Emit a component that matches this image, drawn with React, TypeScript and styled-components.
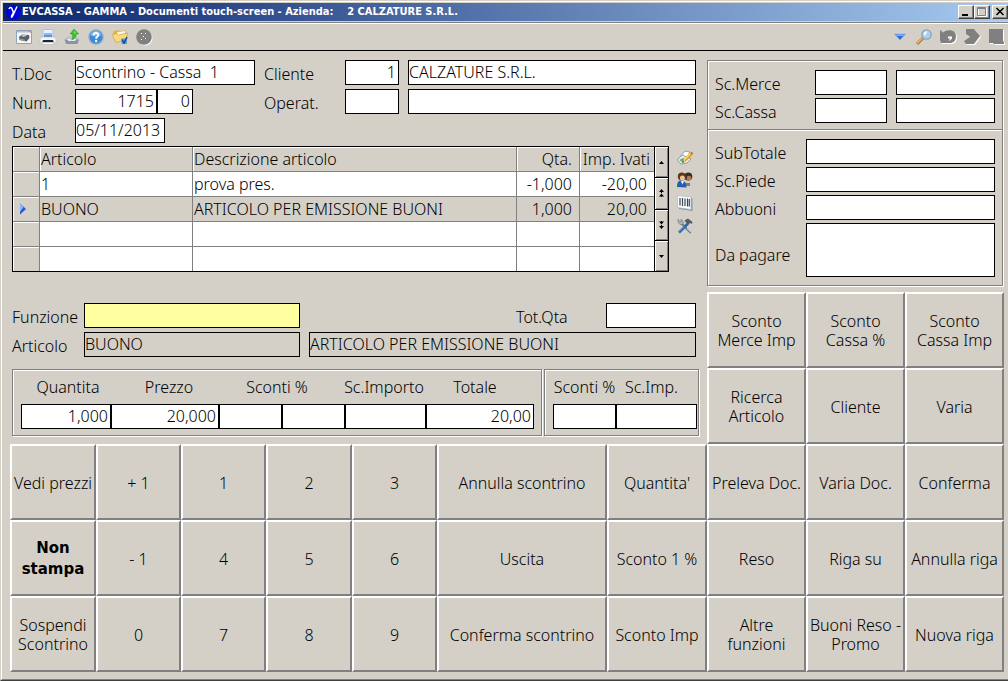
import React from "react";
import styled, { createGlobalStyle, css } from "styled-components";

const FACE = "#d4d0c8";
const SHADOW = "#808080";

const GlobalStyle = createGlobalStyle`
  *, *::before, *::after { box-sizing: border-box; }
  html, body { margin: 0; background: ${FACE}; }
  body, button, input {
    font-family: "Noto Sans", "Open Sans", sans-serif;
    font-size: 16px;
    font-weight: 300;
    line-height: 22px;
    color: #000;
  }
`;

const Window = styled.div`
  min-height: 100vh;
  display: flex;
  flex-direction: column;
  overflow: hidden;
  border: 1px solid ${FACE};
  border-right: 0;
  border-bottom-color: #404040;
`;

const Frame = styled.div`
  flex: 1;
  padding: 1px 0 0 1px;
  border: 1px solid #fff;
  border-right: 0;
  border-bottom-color: ${SHADOW};
`;

const TitleBar = styled.header`
  display: flex;
  align-items: center;
  height: 18px;
  padding-left: 2px;
  background: linear-gradient(to right, #0a246a, #a6caf0);
`;

const Title = styled.h1`
  flex: 1;
  margin: 0 0 0 1px;
  color: #fff;
  font: 700 11px/18px "DejaVu Sans Condensed", "DejaVu Sans", sans-serif;
  white-space: pre;
`;

const CaptionButton = styled.button<{ $gap?: boolean }>`
  width: 16px;
  height: 14px;
  padding: 0;
  margin-left: ${(p) => (p.$gap ? 2 : 0)}px;
  background: ${FACE};
  border: 1px solid;
  border-color: #fff #404040 #404040 #fff;
  box-shadow: inset -1px -1px 0 ${SHADOW};
  svg { display: block; }
`;

const Toolbar = styled.div`
  display: flex;
  align-items: center;
  gap: 8px;
  height: 29px;
  margin-top: 1px;
  padding: 0 4px 0 13px;
  border-top: 1px solid ${SHADOW};
  border-bottom: 1px solid #000;
  box-shadow: inset 0 1px 0 #fff;
`;

const IconButton = styled.button`
  width: 16px;
  height: 16px;
  padding: 0;
  border: 0;
  background: none;
  svg { display: block; overflow: visible; }
`;

const Spacer = styled.span`
  flex: 1;
`;

const Body = styled.main`
  display: grid;
  grid-template-columns: minmax(0, 697fr) minmax(0, 297fr);
  padding: 9px 4px 7px 7px;
`;

const Column = styled.section`
  display: flex;
  flex-direction: column;
`;

const Area = styled.div<{ $top?: number }>`
  display: flex;
  flex-direction: column;
  gap: 4px;
  margin: ${(p) => p.$top ?? 0}px 11px 0 2px;
`;

const Row = styled.div`
  display: flex;
`;

const Label = styled.label<{ $w: number }>`
  flex: none;
  width: ${(p) => p.$w}px;
  padding-top: 3px;
  white-space: nowrap;
`;

const Field = styled.input<{ $w?: number; $gap?: boolean; $right?: boolean; $tone?: string; $tall?: boolean }>`
  ${(p) => (p.$w ? css`flex: none; width: ${p.$w}px;` : css`flex: 1; width: 0; min-width: 0;`)}
  height: ${(p) => (p.$tall ? 54 : 25)}px;
  margin: 0 0 0 ${(p) => (p.$gap ? 9 : 0)}px;
  padding: 0 2px 2px 0;
  border: 1px solid #000;
  border-radius: 0;
  outline: 0;
  background: ${(p) => p.$tone ?? "#fff"};
  text-align: ${(p) => (p.$right ? "right" : "left")};
`;

const HeaderForm = styled(Area)`
  display: grid;
  grid-template-columns: 252px minmax(0, 1fr);
  gap: 0;
`;

const Stack = styled.div`
  display: flex;
  flex-direction: column;
  gap: 4px;
`;

const TableArea = styled.div`
  display: flex;
  margin: 3px 14px 0 2px;
`;

const TableFrame = styled.div`
  flex: 1;
  display: flex;
  border: 1px solid #000;
`;

const Table = styled.table`
  flex: 1;
  width: 0;
  table-layout: fixed;
  border-spacing: 0;
  background: #fff;
`;

const Tr = styled.tr<{ $shaded?: boolean }>`
  background: ${(p) => (p.$shaded ? FACE : "#fff")};
  &:last-child > * { border-bottom: 0; height: 24px; }
  thead &:last-child > * { border-bottom: 1px solid ${SHADOW}; height: 25px; }
`;

const cell = css<{ $right?: boolean; $last?: boolean }>`
  height: 25px;
  border-bottom: 1px solid ${SHADOW};
  border-right: ${(p) => (p.$last ? "0" : `1px solid ${SHADOW}`)};
  text-align: ${(p) => (p.$right ? "right" : "left")};
  font-weight: 300;
  line-height: 22px;
  white-space: nowrap;
`;

const Th = styled.th`
  ${cell}
  padding: 0 ${(p) => (p.$last ? 4 : 7)}px 0 1px;
  background: ${FACE};
  box-shadow: inset 1px 1px 0 #fff;
`;

const Td = styled.td`
  ${cell}
  padding: 0 7px 0 1px;
`;

const Selector = styled.td`
  ${cell}
  padding: 0 0 0 6px;
  background: ${FACE};
  box-shadow: inset 1px 1px 0 #fff;
  svg { display: block; }
`;

const Scroller = styled.div`
  display: flex;
  flex-direction: column;
  width: 14px;
  border-left: 1px solid #000;
`;

const ScrollButton = styled.button`
  flex: 1;
  display: flex;
  align-items: center;
  justify-content: center;
  padding: 0;
  border: 0;
  background: ${FACE};
  box-shadow: inset 1px 1px 0 #fff, inset -1px -1px 0 ${SHADOW};
  & + & { border-top: 1px solid #000; }
`;

const SideIcons = styled.div`
  display: flex;
  flex-direction: column;
  gap: 7px;
  margin-left: 8px;
  padding-top: 3px;
`;

const Group = styled.div`
  border: 1px solid ${SHADOW};
  box-shadow: inset 1px 1px 0 #fff, 1px 1px 0 #fff;
`;

const TotalsGroup = styled(Group)`
  display: flex;
  flex-direction: column;
  gap: 3px;
  margin-right: 1px;
  padding: 9px 7px 6px;
  & + & { margin-top: -1px; padding-bottom: 8px; }
`;

const DueLabel = styled(Label)`
  align-self: center;
  padding-top: 10px;
`;

const LineGroups = styled.div`
  display: grid;
  grid-template-columns: minmax(0, 530fr) minmax(0, 155fr);
  gap: 2px;
  margin: 12px 8px 8px 2px;
`;

const LineGroup = styled(Group)<{ $right: number }>`
  padding: 0 ${(p) => p.$right}px 6px 8px;
`;

const Captions = styled.div<{ $cols: string }>`
  display: grid;
  grid-template-columns: ${(p) => p.$cols};
  padding: 6px 0;
  text-align: center;
  white-space: nowrap;
`;

const LineFields = styled.div<{ $cols: string }>`
  display: grid;
  grid-template-columns: ${(p) => p.$cols};
  input { width: 100%; }
`;

const Keypad = styled.div<{ $cols: string }>`
  display: grid;
  grid-template-columns: ${(p) => p.$cols};
  grid-auto-rows: 76px;
  margin-top: auto;
`;

const Key = styled.button<{ $bold?: boolean }>`
  min-width: 0;
  padding: 2px 0 0;
  border: 2px solid;
  border-color: #fff ${SHADOW} ${SHADOW} #fff;
  background: ${FACE};
  line-height: 19px;
  white-space: pre;
  ${(p) => p.$bold && css`font: 700 15px/21px "DejaVu Sans", sans-serif;`}
`;

const Icon = ({ children }: { children: React.ReactNode }) => (
  <svg width="16" height="16" viewBox="0 0 16 16" aria-hidden="true">{children}</svg>
);

const GammaLogo = () => (
  <Icon>
    <circle cx="8.500" cy="8.500" r="7.300" fill="#0000d8" />
    <path d="M4 5c.8-2.300 2.800-2 3.300.5L8.600 9M12 2.500 8.800 9.500c-1.800 4.500-2.800 4.500-2 2L8.500 8.500" fill="none" stroke="#fff" strokeWidth="1.500" />
  </Icon>
);

const CashIcon = () => (
  <Icon>
    <path d="M.5 1.500h15v13H.5z" fill="#f4f6f8" stroke="#8fa3b8" />
    <path d="M1 2h14v1.500H1z" fill="#a9bfd6" />
    <path d="m12.500 1.500 2 2" stroke="#d66" />
    <path d="m3 8 3-2.500 7 .5.5 3-3 3.500-7-1.500z" fill="#5c5f63" />
    <path d="m5 6.500 4-1 2 1.300-4 1.200z" fill="#c4c8cc" />
    <path d="m4 9.500 5 1.200v1.200l-5-1.200z" fill="#999" />
  </Icon>
);

const PrinterIcon = () => (
  <Icon>
    <path d="M3 .5h10v8.500H3z" fill="#e8f1fc" stroke="#a9c3e2" />
    <path d="M4 4h8v4.500H4z" fill="#4f90e4" />
    <path d="M4 4h8v2H4z" fill="#8dbcf4" />
    <path d="M1 8h14l1 2.500V14H0v-3.500z" fill="#f3f5f8" stroke="#b3bac4" strokeWidth=".6" />
    <path d="M3 11h10l.7 2H2.300z" fill="#22262c" />
    <path d="M2 13.500h12v2H2z" fill="#fdfdfd" stroke="#a9adb3" strokeWidth=".5" />
  </Icon>
);

const ExportIcon = () => (
  <Icon>
    <path d="m1 10 3-2.500h8.500L15 10l-2 4.500H3z" fill="#b9c2ce" />
    <path d="m.5 10.500 1.500 4.500h11.500l1.500-4.500z" fill="#8994a3" />
    <path d="M3 10h9l-1 2H4.500z" fill="#e8edf3" />
    <path d="m10 0 4.800 5h-2.500c0 3-1.500 5-4.800 6C9 9 8.800 7.500 8.300 5H6z" fill="#35c728" stroke="#219b1b" strokeWidth=".5" />
    <path d="m10 1.500 2 2.500h-1.500l-.5 2z" fill="#8eea78" />
  </Icon>
);

const HelpIcon = () => (
  <Icon>
    <circle cx="8" cy="8" r="7" fill="#3b8ad4" stroke="#8aa9c6" strokeWidth="1.300" />
    <path d="M2.500 6.500a5.600 5.600 0 0 1 11 0c-3 1.500-8 1.500-11 0z" fill="#79b6ec" />
    <path d="M5.500 6.200C5.700 3.300 10.500 3.400 10.300 6c-.1 1.700-2.200 1.700-2.200 3.700" fill="none" stroke="#fff" strokeWidth="1.900" />
    <circle cx="8.100" cy="12" r="1.200" fill="#fff" />
  </Icon>
);

const FolderIcon = () => (
  <Icon>
    <path d="m1 2.500 5-1.500 1.500 1.500 6-1.500 1.500 9L3 13z" fill="#e3b344" />
    <path d="m5 3.500 8-1.500.5 4-8 2z" fill="#fffbe8" />
    <path d="m0 5.500 5-1L6.500 6 15.500 4 14 11 4 13.500z" fill="#f8d985" stroke="#c99a35" strokeWidth=".6" />
    <path d="M9.500 9.500h5.500V15H9.500z" fill="#5c9bdc" />
    <path d="m10 10.500 2 3.500 3-6" fill="none" stroke="#174a87" strokeWidth="1.500" />
  </Icon>
);

const DisabledGlobeIcon = () => (
  <Icon>
    <circle cx="9" cy="9" r="7.500" fill="#fff" />
    <circle cx="8" cy="8" r="7.800" fill={SHADOW} />
    <path d="M5 4h1v1H5zM9 4h1v1H9zM7 7h1v1H7zM5 10h1v1H5zM9 9h1v1H9z" fill="#fff" />
  </Icon>
);

const DropArrowIcon = () => (
  <Icon>
    <path d="M2.500 5h11L8 11z" fill="#2f6be0" stroke="#89abea" strokeWidth=".6" />
    <path d="M3.500 5.500h9L11 7H5z" fill="#84b2f7" />
  </Icon>
);

const MagnifierIcon = () => (
  <Icon>
    <path d="m7 9-6 6" stroke="#a87532" strokeWidth="3" />
    <path d="m6.500 9-5.500 5.500" stroke="#eebd68" strokeWidth="1.300" />
    <circle cx="10.500" cy="5.500" r="4.700" fill="#a5d2f4" stroke="#8e9fb0" strokeWidth="1.300" />
    <path d="M7.500 5a3 3 0 0 1 4-2.500L9 7z" fill="#eef8ff" />
  </Icon>
);

const disabledShapes = {
  undo: "M0 1l3.500 2.500C6 0 16 0 16 7c0 5-3 7-6 7H1L0 11z",
  forward: "M2 0h8l6 7-6 8H2l-2-3 6-4-4-3z",
  exit: "M1 0h14v12l1 1v2H6l-1-1H1z",
};

const DisabledIcon = ({ shape }: { shape: keyof typeof disabledShapes }) => (
  <Icon>
    <path d={disabledShapes[shape]} fill="#fff" transform="translate(1 1)" />
    <path d={disabledShapes[shape]} fill={SHADOW} />
    {shape === "undo" && <path d="M8 7.500h4v2l-2 2H8.500l2-2H8z" fill="#fff" />}
  </Icon>
);

const NotesIcon = () => (
  <Icon>
    <path d="m3 8 5-6 5 1-3 5z" fill="#f8fafb" stroke="#7d8b99" strokeWidth=".8" />
    <path d="m0 11 5-5 9 4-4 4-6 1z" fill="#e5ebf1" stroke="#7d8b99" strokeWidth=".8" />
    <path d="m2 11 4-2 2 1-3 3z" fill="#6aaf62" />
    <path d="m14.500 4.500-7 7" stroke="#dc9b16" strokeWidth="3" />
    <path d="m14 4-7 7" stroke="#ffe16b" strokeWidth="1.200" />
    <path d="m14 3.500 1.500 1.500" stroke="#d15b4f" strokeWidth="2" />
    <path d="m5 14 1-2.500 1.500 1.500z" fill="#444" />
  </Icon>
);

const PeopleIcon = () => (
  <Icon>
    <path d="M7 15c0-5 2-6 4.500-6S16 10 15.500 14z" fill="#c9cdd2" />
    <circle cx="11.300" cy="4.500" r="4" fill="#3c2d24" />
    <circle cx="12" cy="6.200" r="2.400" fill="#b07a54" />
    <path d="M0 15C0 10 1.500 8.500 4.500 8.500s5 2 5 7z" fill="#1f5fae" />
    <path d="m3.500 8.500 2 4 1.800-3.700z" fill="#eaf2fb" />
    <circle cx="4.800" cy="4.500" r="4" fill="#5a3a1d" />
    <circle cx="5.400" cy="6" r="2.500" fill="#ecc297" />
    <path d="M9 11h4v3H9z" fill="#93765c" />
  </Icon>
);

const BarcodeIcon = () => (
  <Icon>
    <path d="m1 1 13 1.500 1.500 1V16L2 14z" fill="#8797a8" />
    <path d="m.5.500 13.500 1.500v12.500L.5 12.500z" fill="#fafcfe" stroke="#a7b8c9" strokeWidth=".7" />
    <path d="M3 3v7.500M5.500 3v8M8 3.500V11M10.500 3.500v8M12.300 4v7.500" stroke="#3e4650" strokeWidth="1.200" />
  </Icon>
);

const ToolsIcon = () => (
  <Icon>
    <path d="m4 5 10 10" stroke="#6a7077" strokeWidth="2" />
    <path d="M1 1v3l2 2.500h3l.5-3L4 1v2.500H2.500z" fill="#a9b1ba" stroke="#666e77" strokeWidth=".5" />
    <path d="m11 5.500-9 9" stroke="#2b67a8" strokeWidth="2.600" />
    <path d="m7 8.500-5 5" stroke="#79b2e8" />
    <path d="M7.500 2.500 11 .5l4.500 3.500-.5 2-2-1-1.500 1.500L9.500 5z" fill="#555b62" />
    <path d="m10 10 4.500 4.500" stroke="#c5ccd3" strokeWidth="1.300" />
  </Icon>
);

const RowMarker = () => (
  <svg width="8" height="12" viewBox="0 0 8 12" aria-label="Riga corrente">
    <path d="M1 .5 7 6l-6 5.500z" fill="#2458d8" />
    <path d="M1 .5 4.500 4 1 9z" fill="#8ab8f5" />
  </svg>
);

const arrows: Record<string, string> = {
  Su: "M5.500 4 8 7H3z",
  "Pagina su": "M5.500 1 8 4H3zM5.500 5.500 8 8.500H3zM5 3h1v2H5zM5 8h1v1H5z",
  "Pagina giù": "M3 1.500h5L5.500 4.500zM3 6h5L5.500 9zM5 1h1v1H5zM5 5h1v2H5z",
  Giù: "M3 4h5L5.500 7z",
};

const columns = [
  { name: "Articolo", right: false },
  { name: "Descrizione articolo", right: false },
  { name: "Qta.", right: true },
  { name: "Imp. Ivati", right: true },
];

const rows = [
  { cells: ["1", "prova pres.", "-1,000", "-20,00"] },
  { cells: ["BUONO", "ARTICOLO PER EMISSIONE BUONI", "1,000", "20,00"], current: true },
  { cells: ["", "", "", ""] },
  { cells: ["", "", "", ""] },
];

const leftKeys = [
  "Vedi prezzi", "+ 1", "1", "2", "3", "Annulla scontrino", "Quantita'",
  "Non\nstampa", "- 1", "4", "5", "6", "Uscita", "Sconto 1 %",
  "Sospendi\nScontrino", "0", "7", "8", "9", "Conferma scontrino", "Sconto Imp",
];

const rightKeys = [
  "Sconto\nMerce Imp", "Sconto\nCassa %", "Sconto\nCassa Imp",
  "Ricerca\nArticolo", "Cliente", "Varia",
  "Preleva Doc.", "Varia Doc.", "Conferma",
  "Reso", "Riga su", "Annulla riga",
  "Altre\nfunzioni", "Buoni Reso -\nPromo", "Nuova riga",
];

const fr = (...n: number[]) => n.map((v) => `minmax(0, ${v}fr)`).join(" ");

const App = () => (
  <>
    <GlobalStyle />
    <Window>
      <Frame>
        <TitleBar>
          <GammaLogo />
          <Title>{"EVCASSA - GAMMA - Documenti touch-screen - Azienda:    2 CALZATURE S.R.L."}</Title>
          <CaptionButton aria-label="Riduci a icona">
            <svg width="14" height="12"><path d="M3 8h6v2H3z" /></svg>
          </CaptionButton>
          <CaptionButton aria-label="Ingrandisci">
            <svg width="14" height="12">
              <path d="M3.500 2.500h8v8h-8z" fill="none" stroke="#fff" />
              <path d="M2.500 1.500h8v8h-8zM2.500 2.500h8" fill="none" stroke={SHADOW} />
            </svg>
          </CaptionButton>
          <CaptionButton $gap aria-label="Chiudi">
            <svg width="14" height="12"><path d="m3.500 2 7 7m0-7-7 7" stroke="#000" strokeWidth="1.600" /></svg>
          </CaptionButton>
        </TitleBar>

        <Toolbar>
          <IconButton aria-label="Cassa"><CashIcon /></IconButton>
          <IconButton aria-label="Stampa"><PrinterIcon /></IconButton>
          <IconButton aria-label="Esporta"><ExportIcon /></IconButton>
          <IconButton aria-label="Aiuto"><HelpIcon /></IconButton>
          <IconButton aria-label="Cartella"><FolderIcon /></IconButton>
          <IconButton aria-label="Web" disabled><DisabledGlobeIcon /></IconButton>
          <Spacer />
          <IconButton aria-label="Menu"><DropArrowIcon /></IconButton>
          <IconButton aria-label="Cerca"><MagnifierIcon /></IconButton>
          <IconButton aria-label="Annulla" disabled><DisabledIcon shape="undo" /></IconButton>
          <IconButton aria-label="Avanti" disabled><DisabledIcon shape="forward" /></IconButton>
          <IconButton aria-label="Esci" disabled><DisabledIcon shape="exit" /></IconButton>
        </Toolbar>

        <Body>
          <Column>
            <HeaderForm>
              <Stack>
                <Row>
                  <Label $w={63} htmlFor="tdoc">T.Doc</Label>
                  <Field $w={180} id="tdoc" defaultValue="Scontrino - Cassa  1" />
                </Row>
                <Row>
                  <Label $w={63} htmlFor="num">Num.</Label>
                  <Field $w={82} $right id="num" defaultValue="1715" />
                  <Field $w={36} $right aria-label="Serie" defaultValue="0" />
                </Row>
                <Row>
                  <Label $w={63} htmlFor="data">Data</Label>
                  <Field $w={90} id="data" defaultValue="05/11/2013" />
                </Row>
              </Stack>
              <Stack>
                <Row>
                  <Label $w={81} htmlFor="cliente">Cliente</Label>
                  <Field $w={54} $right id="cliente" defaultValue="1" />
                  <Field $gap aria-label="Nome cliente" defaultValue="CALZATURE S.R.L." />
                </Row>
                <Row>
                  <Label $w={81} htmlFor="operat">Operat.</Label>
                  <Field $w={54} id="operat" />
                  <Field $gap aria-label="Nome operatore" />
                </Row>
              </Stack>
            </HeaderForm>

            <TableArea>
              <TableFrame>
                <Table>
                  <colgroup>
                    <col width="27" />
                    <col width="153" />
                    <col />
                    <col width="63" />
                    <col width="74" />
                  </colgroup>
                  <thead>
                    <Tr $shaded>
                      <Th aria-label="Selezione" />
                      {columns.map((c, i) => (
                        <Th key={c.name} $right={c.right} $last={i === 3}>{c.name}</Th>
                      ))}
                    </Tr>
                  </thead>
                  <tbody>
                    {rows.map((r, i) => (
                      <Tr key={i} $shaded={r.current}>
                        <Selector>{r.current && <RowMarker />}</Selector>
                        {r.cells.map((text, j) => (
                          <Td key={j} $right={columns[j].right} $last={j === 3}>{text}</Td>
                        ))}
                      </Tr>
                    ))}
                  </tbody>
                </Table>
                <Scroller>
                  {Object.entries(arrows).map(([name, d]) => (
                    <ScrollButton key={name} aria-label={name}>
                      <svg width="11" height="10"><path d={d} /></svg>
                    </ScrollButton>
                  ))}
                </Scroller>
              </TableFrame>
              <SideIcons>
                <IconButton aria-label="Note"><NotesIcon /></IconButton>
                <IconButton aria-label="Clienti"><PeopleIcon /></IconButton>
                <IconButton aria-label="Codice a barre"><BarcodeIcon /></IconButton>
                <IconButton aria-label="Strumenti"><ToolsIcon /></IconButton>
              </SideIcons>
            </TableArea>

            <Area $top={31}>
              <Row>
                <Label $w={72} htmlFor="funzione">Funzione</Label>
                <Field $w={216} $tone="#ffffa0" id="funzione" />
                <Spacer />
                <Label $w={90} htmlFor="totqta">Tot.Qta</Label>
                <Field $w={90} $right id="totqta" />
              </Row>
              <Row>
                <Label $w={72} htmlFor="articolo">Articolo</Label>
                <Field $w={216} $tone={FACE} id="articolo" readOnly value="BUONO" />
                <Field $gap $tone={FACE} aria-label="Descrizione articolo" readOnly value="ARTICOLO PER EMISSIONE BUONI" />
              </Row>
            </Area>

            <LineGroups>
              <LineGroup $right={7}>
                <Captions $cols={fr(94, 108, 108, 106, 76, 21)}>
                  <label htmlFor="quantita">Quantita</label>
                  <label htmlFor="prezzo">Prezzo</label>
                  <label htmlFor="sconti">Sconti %</label>
                  <label htmlFor="scimporto">Sc.Importo</label>
                  <label htmlFor="totale">Totale</label>
                </Captions>
                <LineFields $cols={fr(90, 108, 63, 63, 81, 108)}>
                  <Field $right id="quantita" defaultValue="1,000" />
                  <Field $right id="prezzo" defaultValue="20,000" />
                  <Field $right id="sconti" />
                  <Field $right aria-label="Secondo sconto %" />
                  <Field $right id="scimporto" />
                  <Field $right id="totale" defaultValue="20,00" />
                </LineFields>
              </LineGroup>
              <LineGroup $right={1}>
                <Captions $cols={fr(63, 71, 10)}>
                  <label htmlFor="sconti2">Sconti %</label>
                  <label htmlFor="scimp2">Sc.Imp.</label>
                </Captions>
                <LineFields $cols={fr(63, 81)}>
                  <Field $right id="sconti2" />
                  <Field $right id="scimp2" />
                </LineFields>
              </LineGroup>
            </LineGroups>

            <Keypad $cols={fr(86, 85, 85, 86, 85, 170, 100)}>
              {leftKeys.map((k) => <Key key={k} $bold={k.startsWith("Non")}>{k}</Key>)}
            </Keypad>
          </Column>

          <Column>
            <TotalsGroup>
              <Row>
                <Label $w={100} htmlFor="scmerce">Sc.Merce</Label>
                <Field $w={72} $right id="scmerce" />
                <Field $gap $right aria-label="Importo sconto merce" />
              </Row>
              <Row>
                <Label $w={100} htmlFor="sccassa">Sc.Cassa</Label>
                <Field $w={72} $right id="sccassa" />
                <Field $gap $right aria-label="Importo sconto cassa" />
              </Row>
            </TotalsGroup>
            <TotalsGroup>
              <Row>
                <Label $w={91} htmlFor="subtotale">SubTotale</Label>
                <Field $right id="subtotale" />
              </Row>
              <Row>
                <Label $w={91} htmlFor="scpiede">Sc.Piede</Label>
                <Field $right id="scpiede" />
              </Row>
              <Row>
                <Label $w={91} htmlFor="abbuoni">Abbuoni</Label>
                <Field $right id="abbuoni" />
              </Row>
              <Row>
                <DueLabel $w={91} htmlFor="dapagare">Da pagare</DueLabel>
                <Field $tall $right id="dapagare" />
              </Row>
            </TotalsGroup>

            <Keypad $cols={fr(99, 99, 99)}>
              {rightKeys.map((k) => <Key key={k}>{k}</Key>)}
            </Keypad>
          </Column>
        </Body>
      </Frame>
    </Window>
  </>
);

export default App;
